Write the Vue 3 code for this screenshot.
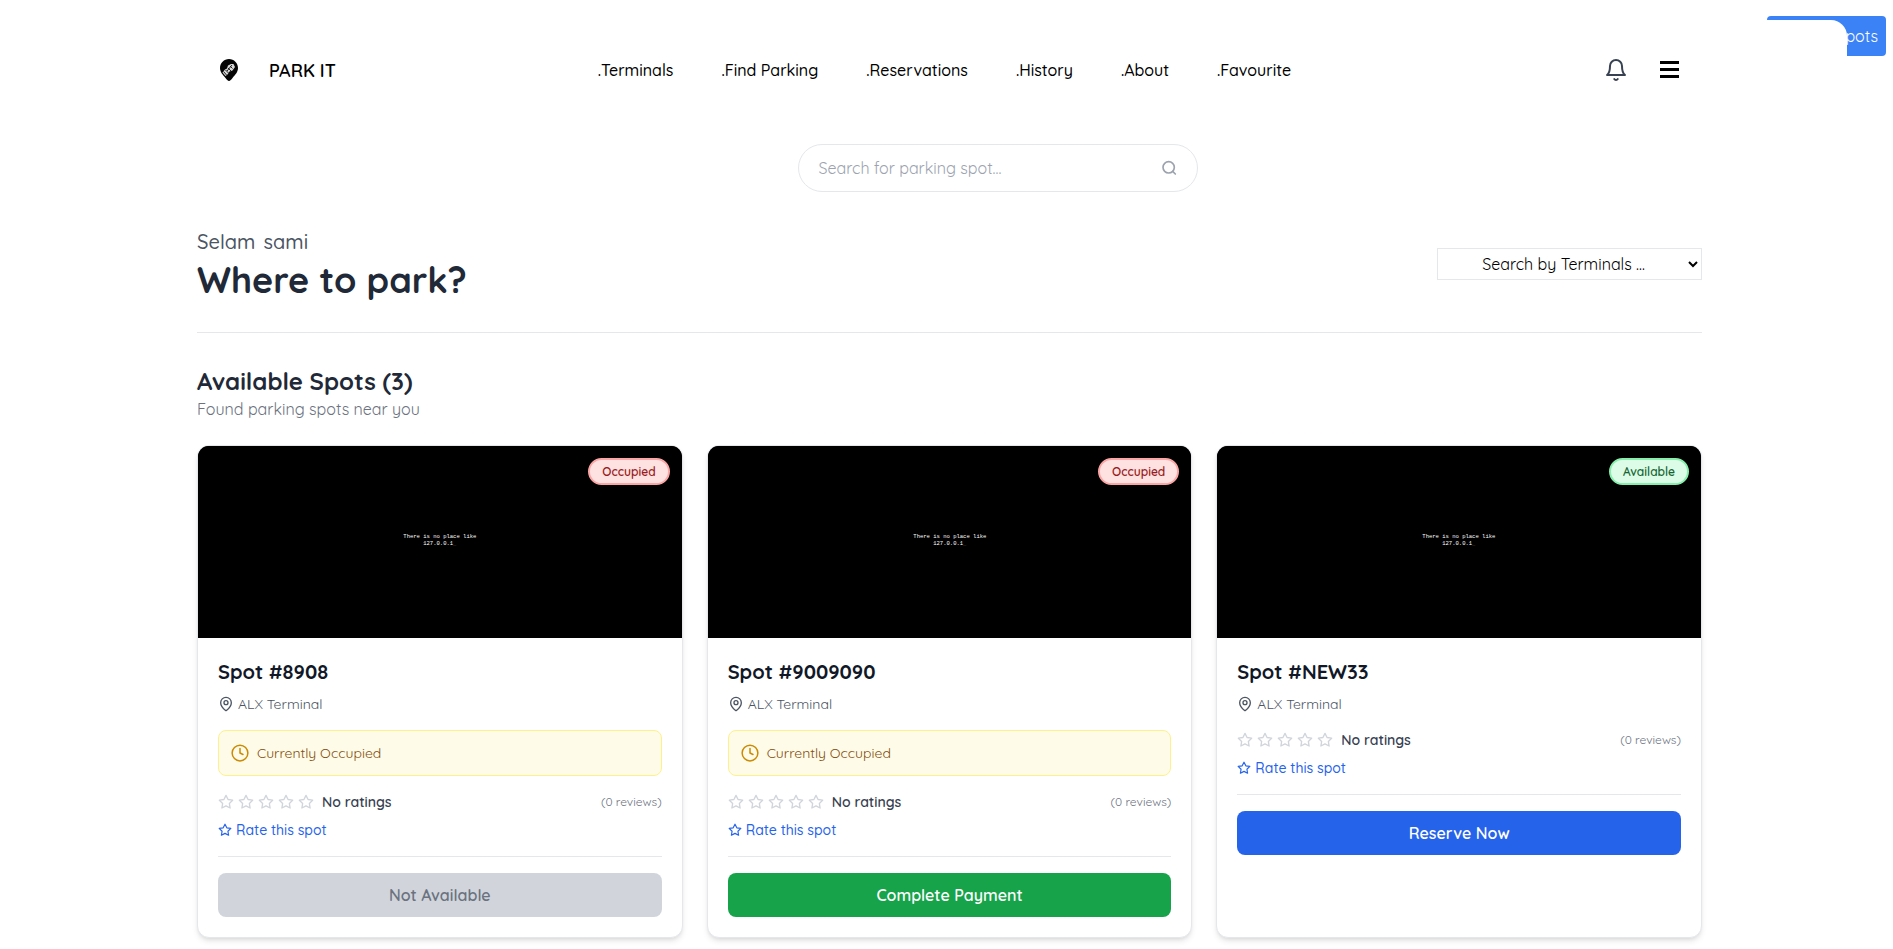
<template>
  <button class="spots-btn" type="button">Spots</button>

  <div class="page">
    <header class="navbar">
      <a class="brand" href="#">
        <svg class="logo" viewBox="0 0 18 22" aria-hidden="true">
          <path d="M9 0C4 0 0 4 0 9c0 4 3 7 5.500 10C6.800 20.600 7.800 22 9 22s2.200-1.400 3.500-3C15 16 18 13 18 9c0-5-4-9-9-9z" fill="#050505" />
          <path d="M2.500 13.500 5 10.500l2-1 1-3L11 5l2.500 0 1.500 3-2.500 3.500-3 1-2 3-2 1.500z" fill="#d8d8d8" />
          <path d="M3.500 12.500l3 3.500M5.500 11l3 3M8 9l3 3M10 7l2.500 2.500M12 6l-5 6" stroke="#222" stroke-width="1" fill="none" />
        </svg>
        <span>PARK IT</span>
      </a>
      <nav class="links">
        <a v-for="link in links" :key="link" href="#">.{{ link }}</a>
      </nav>
      <div class="tools">
        <button class="icon-btn" type="button" aria-label="Notifications">
          <svg width="24" height="24" viewBox="0 0 24 24" fill="none" stroke="#374151" stroke-width="2" stroke-linecap="round" stroke-linejoin="round">
            <path d="M18 8A6 6 0 0 0 6 8c0 7-3 9-3 9h18s-3-2-3-9" />
            <path d="M13.730 21a2 2 0 0 1-3.460 0" />
          </svg>
        </button>
        <button class="icon-btn" type="button" aria-label="Menu">
          <svg width="20" height="20" viewBox="0 0 20 20" fill="#000">
            <rect y="1" width="19" height="3" />
            <rect y="8" width="19" height="3" />
            <rect y="15" width="19" height="3" />
          </svg>
        </button>
      </div>
    </header>

    <form class="search" @submit.prevent>
      <input v-model="query" type="text" aria-label="Search for parking spot" placeholder="Search for parking spot..." />
      <button class="icon-btn" type="submit" aria-label="Search">
        <svg width="16" height="16" viewBox="0 0 24 24" fill="none" stroke="#9ca3af" stroke-width="2.5" stroke-linecap="round">
          <circle cx="11.500" cy="11" r="8.500" />
          <path d="m21.500 21-4-4" />
        </svg>
      </button>
    </form>

    <section class="intro">
      <div>
        <p class="hello"><span>Selam</span><span>sami</span></p>
        <h1>Where to park?</h1>
      </div>
      <select v-model="terminal" aria-label="Search by Terminals">
        <option value="">Search by Terminals ...</option>
      </select>
    </section>

    <h2>Available Spots ({{ spots.length }})</h2>
    <p class="found">Found parking spots near you</p>

    <div class="spots">
      <article v-for="spot in spots" :key="spot.number" class="card">
        <div class="photo">
          <svg viewBox="0 0 1920 1080" preserveAspectRatio="xMidYMid slice">
            <rect width="1920" height="1080" fill="#000" />
            <g fill="#fff" font-size="22" text-anchor="middle">
              <text x="960" y="524">There is no place like</text>
              <text x="960" y="550">127.0.0.1<tspan fill="#555">_</tspan></text>
            </g>
          </svg>
          <span class="badge" :class="spot.available ? 'free' : 'taken'">{{ spot.available ? 'Available' : 'Occupied' }}</span>
        </div>
        <div class="body">
          <h3>Spot #{{ spot.number }}</h3>
          <div class="place">
            <svg width="16" height="16" viewBox="0 0 24 24" fill="none" stroke="currentColor" stroke-width="2" stroke-linecap="round" stroke-linejoin="round">
              <path d="M20 10c0 5-5.500 10.200-7.400 11.800a1 1 0 0 1-1.200 0C9.500 20.200 4 15 4 10a8 8 0 0 1 16 0" />
              <circle cx="12" cy="10" r="3" />
            </svg>
            <span>ALX Terminal</span>
          </div>
          <div v-if="!spot.available" class="notice">
            <svg width="18" height="18" viewBox="0 0 24 24" fill="none" stroke="#ca8a04" stroke-width="2" stroke-linecap="round" stroke-linejoin="round">
              <circle cx="12" cy="12" r="10.500" />
              <path d="M12 6v6l4 2" />
            </svg>
            <span>Currently Occupied</span>
          </div>
          <div class="rating">
            <svg v-for="n in 5" :key="n" width="16" height="16" viewBox="0 0 24 24" fill="none" stroke="#d1d5db" stroke-width="2" stroke-linejoin="round">
              <path :d="starPath" />
            </svg>
            <span class="score">No ratings</span>
            <span class="reviews">(0 reviews)</span>
          </div>
          <button class="rate" type="button">
            <svg width="14" height="14" viewBox="0 0 24 24" fill="none" stroke="currentColor" stroke-width="2" stroke-linejoin="round">
              <path :d="starPath" />
            </svg>
            <span>Rate this spot</span>
          </button>
          <div class="actions">
            <button class="action" :class="spot.kind" type="button" :disabled="spot.kind === 'off'">{{ spot.action }}</button>
          </div>
        </div>
      </article>
    </div>
  </div>
</template>

<script setup>
import { ref } from 'vue'

const query = ref('')
const terminal = ref('')

const links = ['Terminals', 'Find Parking', 'Reservations', 'History', 'About', 'Favourite']

const spots = ref([
  { number: '8908', available: false, action: 'Not Available', kind: 'off' },
  { number: '9009090', available: false, action: 'Complete Payment', kind: 'pay' },
  { number: 'NEW33', available: true, action: 'Reserve Now', kind: 'reserve' },
])

const starPath = 'M12 2l3.090 6.260L22 9.270l-5 4.870 1.180 6.880L12 17.770l-6.180 3.250L7 14.140 2 9.270l6.910-1.010L12 2z'
</script>

<style>
body { background:#fff; }
</style>

<style scoped>
.page, .spots-btn, .page button, .page input, .page select { font-family:Quicksand, Lato, sans-serif; }
.page { position:relative; z-index:1; box-sizing:border-box; margin:20px 46px 0 52px; padding:0 145px 11px; border-radius:16px; background:#fff; color:#1f2937; }
.page *, .spots-btn { box-sizing:border-box; }
h1, h2, h3, p { margin:0; }
svg { display:block; flex:none; }
a { color:#000; text-decoration:none; }
button { cursor:pointer; }
.spots-btn { position:absolute; top:16px; right:7px; width:119px; height:40px; padding:8px; border:0; border-radius:4px; background:#3b82f6; color:#fff; font-size:16px; text-align:right; }
.icon-btn { display:flex; padding:0; border:0; background:none; }

.navbar { display:flex; align-items:center; justify-content:space-between; height:100px; padding:0 22px; }
.brand { display:flex; align-items:center; gap:30px; width:166px; font-size:18px; font-weight:600; }
.logo { width:20px; height:22px; }
.links { display:flex; gap:48px; font-size:16px; font-weight:500; }
.tools { display:flex; align-items:center; justify-content:flex-end; gap:32px; width:176px; }

.search { display:flex; align-items:center; width:400px; height:48px; margin:24px auto 0; padding:0 20px; border:1px solid #e5e7eb; border-radius:24px; position:relative; left:48px; }
.search input { flex:1; min-width:0; padding:0; border:0; outline:0; background:none; font-size:16px; }
.search input::placeholder { color:#9ca3af; }

.intro { display:flex; align-items:center; justify-content:space-between; margin-top:36px; padding-bottom:32px; border-bottom:1px solid #e5e7eb; }
.hello { display:flex; gap:8px; margin-bottom:4px; font-size:20px; line-height:28px; font-weight:500; color:#4b5563; }
h1 { font-size:36px; line-height:40px; font-weight:700; }
.intro select { width:265px; height:32px; border:1px solid #e5e7eb; border-radius:0; background:#fff; color:#000; font-size:16px; text-align:center; }
h2 { margin-top:32px; font-size:24px; line-height:32px; font-weight:700; }
.found { font-size:16px; line-height:24px; color:#6b7280; }

.spots { display:grid; grid-template-columns:repeat(3, minmax(0, 1fr)); gap:24px; margin-top:24px; }
.card { overflow:hidden; border:1px solid #e5e7eb; border-radius:12px; background:#fff; box-shadow:0 4px 6px -1px rgba(0,0,0,0.1), 0 2px 4px -2px rgba(0,0,0,0.1); }
.photo { position:relative; height:192px; background:#000; }
.photo svg { width:100%; height:100%; font-family:"Liberation Mono", monospace; }
.badge { position:absolute; top:12px; right:12px; padding:4px 12px; border:2px solid; border-radius:14px; font-size:12px; line-height:15px; font-weight:600; }
.taken { border-color:#fca5a5; background:#fee2e2; color:#991b1b; }
.free { border-color:#86efac; background:#dcfce7; color:#166534; }

.body { padding:20px; }
h3 { font-size:20px; line-height:28px; font-weight:700; color:#111827; }
.place { display:flex; align-items:center; gap:4px; margin-top:8px; font-size:14px; line-height:20px; color:#4b5563; }
.notice { display:flex; align-items:center; gap:8px; margin-top:16px; padding:12px; border:1px solid #fef08a; border-radius:8px; background:#fefce8; color:#854d0e; font-size:14px; line-height:20px; }
.rating { display:flex; align-items:center; gap:4px; margin-top:16px; line-height:20px; }
.score { margin-left:4px; font-size:14px; font-weight:600; color:#374151; }
.reviews { margin-left:auto; font-size:12px; color:#6b7280; }
.rate { display:flex; align-items:center; gap:4px; margin-top:8px; padding:0; border:0; background:none; color:#2563eb; font-size:14px; line-height:20px; font-weight:500; }
.actions { margin-top:16px; padding-top:16px; border-top:1px solid #e5e7eb; }
.action { display:block; width:100%; height:44px; border:0; border-radius:8px; color:#fff; font-size:16px; font-weight:600; }
.off { background:#d1d5db; color:#6b7280; }
.pay { background:#16a34a; }
.reserve { background:#2563eb; }
</style>
